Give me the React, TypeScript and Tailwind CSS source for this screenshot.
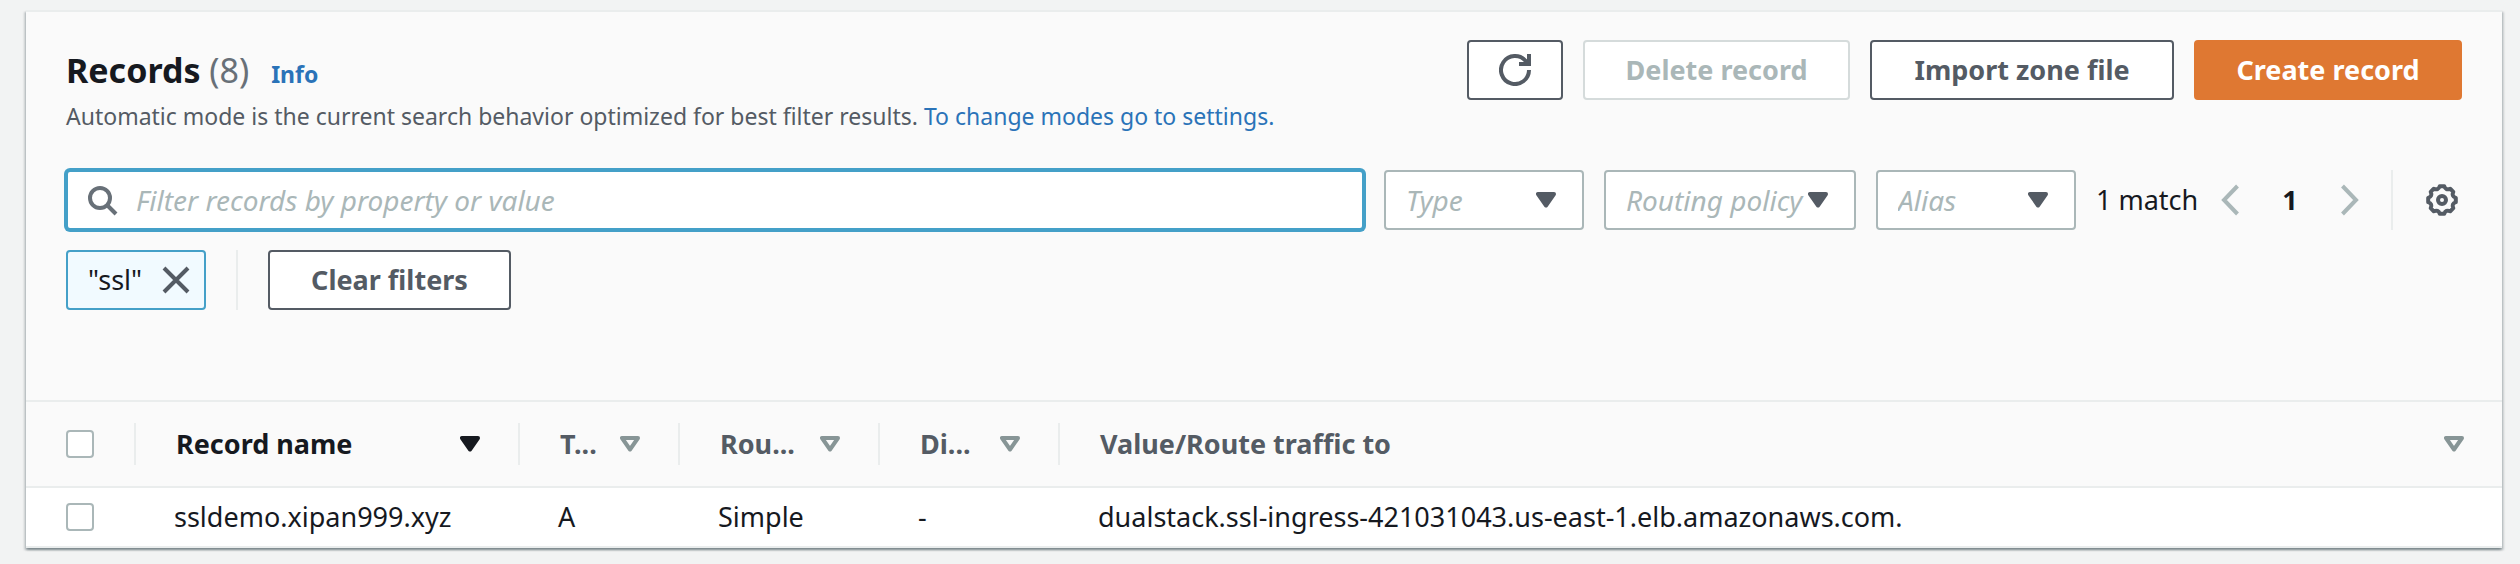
import type { ReactNode } from "react";

function RefreshIcon() {
  return (
    <svg viewBox="0 0 32 32" className="size-8" fill="none" stroke="currentColor" strokeWidth="4" aria-hidden="true">
      <path d="M30 16A14 14 0 1 1 26.8 7.1L28.5 9.5" />
      <path d="M30 0V10H20" />
    </svg>
  );
}

function SearchIcon() {
  return (
    <svg viewBox="0 0 32 32" className="size-8 shrink-0" fill="none" stroke="currentColor" strokeWidth="4" aria-hidden="true">
      <circle cx="12" cy="14" r="10" />
      <path d="M19 21L28 30" />
    </svg>
  );
}

function CloseIcon() {
  return (
    <svg viewBox="0 0 28 28" className="size-7" fill="none" stroke="currentColor" strokeWidth="4" aria-hidden="true">
      <path d="M2 2L26 26M26 2L2 26" />
    </svg>
  );
}

function ChevronIcon({ direction }: { direction: "left" | "right" }) {
  return (
    <svg viewBox="0 0 18 32" className="h-8 w-[18px]" fill="none" stroke="currentColor" strokeWidth="4" aria-hidden="true">
      <path d={direction === "left" ? "M16.5 2L3 16L16.5 30" : "M1.5 2L15 16L1.5 30"} />
    </svg>
  );
}

function GearIcon() {
  return (
    <svg viewBox="-16 -16 32 32" className="size-8" fill="none" stroke="currentColor" strokeWidth="4" strokeLinejoin="round" aria-hidden="true">
      <path d="M13.8 -2.2V2.2Q9.2 3.8 11.3 8.2L8.2 11.3Q3.8 9.2 2.2 13.8H-2.2Q-3.8 9.2 -8.2 11.3L-11.3 8.2Q-9.2 3.8 -13.8 2.2V-2.2Q-9.2 -3.8 -11.3 -8.2L-8.2 -11.3Q-3.8 -9.2 -2.2 -13.8H2.2Q3.8 -9.2 8.2 -11.3L11.3 -8.2Q9.2 -3.8 13.8 -2.2Z" />
      <circle r="4" />
    </svg>
  );
}

function Caret({ filled }: { filled: boolean }) {
  return (
    <svg
      viewBox="0 0 20 16"
      className="h-4 w-5 shrink-0"
      fill={filled ? "currentColor" : "none"}
      stroke="currentColor"
      strokeWidth="4"
      strokeLinejoin="round"
      aria-hidden="true"
    >
      <path d="M2 2H18L10 13.5Z" />
    </svg>
  );
}

function FilterSelect({ label, width }: { label: string; width: string }) {
  return (
    <div className={`relative h-[60px] shrink-0 ${width}`}>
      <select
        aria-label={label}
        className="size-full appearance-none rounded-sm border-2 border-[#aab7b8] bg-white pl-5 text-[28px] text-[#aab7b8] italic"
      >
        <option>{label}</option>
      </select>
      <span className="pointer-events-none absolute inset-y-0 right-7 flex items-center text-[#545b64]">
        <Caret filled />
      </span>
    </div>
  );
}

function HeaderCell({ children, sorted = false, last = false }: { children: ReactNode; sorted?: boolean; last?: boolean }) {
  return (
    <th scope="col" className="h-[84px] p-0 text-left">
      <div className={`flex h-[42px] items-center border-[#eaeded] pr-[38px] pl-10 ${last ? "" : "border-r-2"}`}>
        <button
          type="button"
          className={`flex w-full items-center justify-between font-bold whitespace-nowrap ${sorted ? "text-[#16191f]" : "text-[#545b64]"}`}
        >
          {children}
          <span className={sorted ? "text-[#16191f]" : "text-[#879596]"}>
            <Caret filled={sorted} />
          </span>
        </button>
      </div>
    </th>
  );
}

function Checkbox({ label }: { label: string }) {
  return (
    <input
      type="checkbox"
      aria-label={label}
      className="block size-7 appearance-none rounded-sm border-2 border-[#aab7b8] bg-white"
    />
  );
}

const buttonBase = "flex h-[60px] items-center justify-center rounded-sm border-2 font-bold whitespace-nowrap";

export default function App() {
  return (
    <main className="min-h-screen bg-[#f2f3f3] pt-2.5 pr-[18px] pl-[26px] font-['Noto_Sans',sans-serif] text-[27px] leading-9 text-[#16191f]">
      <section className="border-t-2 border-[#eaeded] bg-white shadow-[0_2px_2px_0_rgba(0,28,36,0.3),2px_2px_2px_0_rgba(0,28,36,0.15),-2px_2px_2px_0_rgba(0,28,36,0.15)]">
        <div className="bg-[#fafafa] px-10 pt-7 pb-[90px]">
          <header className="flex items-start justify-between gap-5">
            <div>
              <div className="flex items-baseline gap-[22px]">
                <h2 className="text-[34px] leading-[60px] font-bold">
                  Records <span className="font-normal text-[#687078]">(8)</span>
                </h2>
                <a href="#info" className="text-[23px] font-bold text-[#2a73b8]">
                  Info
                </a>
              </div>
              <p className="text-[23px] leading-8 text-[#545b64]">
                Automatic mode is the current search behavior optimized for best filter results.{" "}
                <a href="#settings" className="text-[#2a73b8]">
                  To change modes go to settings.
                </a>
              </p>
            </div>
            <div className="flex gap-5">
              <button type="button" aria-label="Refresh" className="flex h-[60px] w-24 items-center justify-center rounded-sm border-2 border-[#545b64] bg-white text-[#545b64]">
                <RefreshIcon />
              </button>
              <button type="button" disabled className={`${buttonBase} w-[267px] border-[#d5dbdb] bg-white text-[#aab7b8]`}>
                Delete record
              </button>
              <button type="button" className={`${buttonBase} w-[304px] border-[#545b64] bg-white text-[#545b64]`}>
                Import zone file
              </button>
              <button type="button" className={`${buttonBase} w-[268px] border-[#df7832] bg-[#df7832] text-white`}>
                Create record
              </button>
            </div>
          </header>

          <div className="mt-[38px] flex items-center gap-5">
            <label className="flex h-[60px] min-w-0 flex-1 items-center gap-4 rounded-sm border-2 border-[#44a0c8] bg-white pl-5 text-[#687078] ring-2 ring-[#44a0c8]">
              <SearchIcon />
              <input
                type="text"
                aria-label="Filter records"
                placeholder="Filter records by property or value"
                className="h-full w-full bg-transparent text-[28px] italic outline-none placeholder:text-[#aab7b8]"
              />
            </label>
            <FilterSelect label="Type" width="w-[200px]" />
            <FilterSelect label="Routing policy" width="w-[252px]" />
            <FilterSelect label="Alias" width="w-[200px]" />
            <div className="flex items-center">
              <span className="w-[125px] whitespace-nowrap">1 match</span>
              <button type="button" aria-label="Previous page" className="text-[#aab7b8]">
                <ChevronIcon direction="left" />
              </button>
              <button type="button" className="w-[102px] text-center font-bold">
                1
              </button>
              <button type="button" aria-label="Next page" className="text-[#aab7b8]">
                <ChevronIcon direction="right" />
              </button>
              <span className="mr-[33px] ml-8 h-[60px] w-0.5 bg-[#eaeded]" />
              <button type="button" aria-label="Preferences" className="mr-1 text-[#545b64]">
                <GearIcon />
              </button>
            </div>
          </div>

          <div className="mt-5 flex h-[60px] items-center">
            <div className="flex h-full w-[140px] items-center justify-between rounded-sm border-2 border-[#44a0c8] bg-[#f1faff] pr-3.5 pl-5">
              <span>"ssl"</span>
              <button type="button" aria-label="Remove filter" className="text-[#545b64]">
                <CloseIcon />
              </button>
            </div>
            <span className="mx-[30px] h-full w-0.5 bg-[#eaeded]" />
            <button type="button" className={`${buttonBase} w-[243px] border-[#545b64] bg-white text-[#545b64]`}>
              Clear filters
            </button>
          </div>
        </div>

        <table className="w-full table-fixed border-collapse">
          <colgroup>
            <col className="w-[110px]" />
            <col className="w-96" />
            <col className="w-40" />
            <col className="w-[200px]" />
            <col className="w-[180px]" />
            <col />
          </colgroup>
          <thead className="border-y-2 border-[#eaeded] bg-[#fafafa]">
            <tr>
              <th scope="col" className="h-[86px] p-0">
                <div className="flex h-[42px] items-center border-r-2 border-[#eaeded] pl-10">
                  <Checkbox label="Select all records" />
                </div>
              </th>
              <HeaderCell sorted>Record name</HeaderCell>
              <HeaderCell>T...</HeaderCell>
              <HeaderCell>Rou...</HeaderCell>
              <HeaderCell>Di...</HeaderCell>
              <HeaderCell last>Value/Route traffic to</HeaderCell>
            </tr>
          </thead>
          <tbody>
            <tr className="h-[60px] border-b-2 border-[#eaeded]">
              <td className="p-0 pl-10">
                <Checkbox label="Select ssldemo.xipan999.xyz" />
              </td>
              <td className="p-0 pl-[38px]">ssldemo.xipan999.xyz</td>
              <td className="p-0 pl-[38px]">A</td>
              <td className="p-0 pl-[38px]">Simple</td>
              <td className="p-0 pl-[38px]">-</td>
              <td className="p-0 pl-[38px]">dualstack.ssl-ingress-421031043.us-east-1.elb.amazonaws.com.</td>
            </tr>
          </tbody>
        </table>
      </section>
    </main>
  );
}
